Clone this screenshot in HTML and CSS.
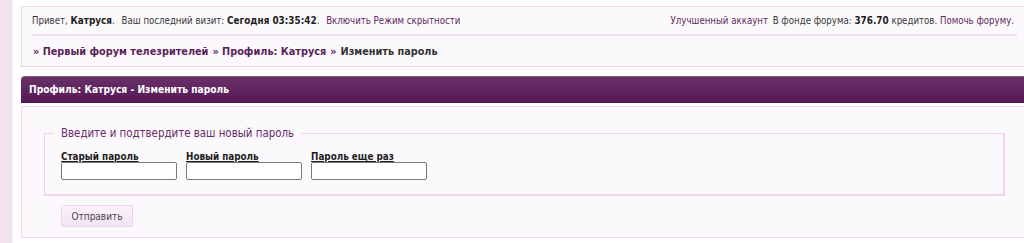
FILE: index.html
```html
<!DOCTYPE html>
<html lang="ru">
<head>
<meta charset="utf-8">
<title>Изменить пароль</title>
<link rel="stylesheet" href="styles.css">
</head>
<body>
<div class="layout">
  <div class="stripe"></div>
  <main class="main">
    <section class="topbox">
      <div class="userbar">
        <div class="user-left">
          <span>Привет, <b>Катруся</b>.</span>
          <span>Ваш последний визит: <b>Сегодня 03:35:42</b>.</span>
          <a href="#">Включить Режим скрытности</a>
        </div>
        <div class="user-right">
          <a href="#">Улучшенный аккаунт</a>
          <span>В фонде форума: <b>376.70</b> кредитов. <a href="#">Помочь форуму.</a></span>
        </div>
      </div>
      <nav class="crumbs">
        <a href="#">» Первый форум телезрителей</a> <a href="#">» Профиль: Катруся</a> <span class="sep">»</span> <span class="current">Изменить пароль</span>
      </nav>
    </section>

    <section class="panel">
      <h2 class="panel-head">Профиль: Катруся - Изменить пароль</h2>
      <div class="panel-body">
        <fieldset class="fs">
          <legend>Введите и подтвердите ваш новый пароль</legend>
          <div class="fields">
            <label class="field"><span class="lbl">Старый пароль</span><input type="password" class="inp"></label>
            <label class="field"><span class="lbl">Новый пароль</span><input type="password" class="inp"></label>
            <label class="field"><span class="lbl">Пароль еще раз</span><input type="password" class="inp"></label>
          </div>
        </fieldset>
        <button class="btn" type="button">Отправить</button>
      </div>
    </section>
  </main>
</div>
</body>
</html>
```

FILE: styles.css
```css
html, body {
  margin: 0;
  padding: 0;
  background: #ffffff;
  overflow: hidden;
}
body {
  font-family: "DejaVu Sans Condensed", "DejaVu Sans", sans-serif;
  font-size: 9.6px;
  color: #3a3a3a;
}
a {
  color: #5c2a5c;
  text-decoration: none;
}
.layout {
  display: flex;
  align-items: stretch;
  min-height: 243px;
}
.stripe {
  flex: 0 0 12px;
  background: #efe4ef;
  border-right: 1px solid #f6eff6;
}
.main {
  flex: 0 0 1007px;
  margin-left: 8px;
  padding-top: 6px;
}
.topbox {
  border: 1px solid #ecd6ec;
  background: #fcf9fc;
  padding: 0 10px;
}
.userbar {
  display: flex;
  justify-content: space-between;
  align-items: center;
  height: 27px;
  border-bottom: 2px solid #f0e0f0;
}
.user-left span,
.user-left a {
  margin-right: 4px;
}
.user-left b,
.user-right b {
  color: #1e1e1e;
  font-size: 9.9px;
}
.user-right {
  margin-right: 3px;
}
.user-right > a {
  margin-right: 2px;
}
.crumbs {
  height: 30px;
  display: flex;
  align-items: center;
  gap: 4px;
  font-size: 10.8px;
  font-weight: bold;
  padding-left: 1px;
}
.crumbs a {
  color: #5a1f5a;
}
.crumbs .sep {
  color: #5a1f5a;
}
.crumbs .current {
  color: #333;
}
.panel {
  margin-top: 9px;
}
.panel-head {
  margin: 0;
  height: 27px;
  box-sizing: border-box;
  display: flex;
  align-items: center;
  padding-left: 8px;
  font-size: 10.2px;
  font-weight: bold;
  color: #ffffff;
  background: linear-gradient(#683068, #561a57);
  border-top: 1px solid #7e5e7e;
  border-bottom: 1px solid #4a1249;
  border-radius: 4px 4px 0 0;
}
.panel-body {
  margin-top: 3px;
  border: 1px solid #efd5ef;
  background: #fbf9fb;
  padding: 18px 22px 10px 22px;
}
.fs {
  margin: 0;
  border: 1px solid #efd3ef;
  border-right-width: 2px;
  border-bottom-width: 2px;
  padding: 10px 15px 14px 16px;
}
.fs legend {
  font-family: "DejaVu Sans Condensed", "DejaVu Sans", sans-serif;
  font-size: 11.4px;
  color: #6a2a6a;
  padding: 0 7px;
  margin-left: -7px;
  line-height: 16px;
}
.fields {
  display: flex;
  gap: 9px;
}
.field {
  display: flex;
  flex-direction: column;
  width: 116px;
}
.lbl {
  font-size: 9.8px;
  font-weight: bold;
  color: #1e1e1e;
  text-decoration: underline;
  line-height: 11px;
}
.inp {
  box-sizing: border-box;
  width: 116px;
  height: 18px;
  margin: 0;
  border: 1px solid #7a7a7a;
  border-radius: 2px;
  background: #fff;
  padding: 0 3px;
}
.btn {
  display: block;
  margin: 9px 0 0 17px;
  width: 72px;
  height: 22px;
  font-family: "DejaVu Sans Condensed", "DejaVu Sans", sans-serif;
  font-size: 10px;
  color: #4e3a4e;
  background: linear-gradient(#fbf3fb, #f3e4f3);
  border: 1px solid #ecd3ec;
  border-radius: 2px;
  padding: 0;
}
```
